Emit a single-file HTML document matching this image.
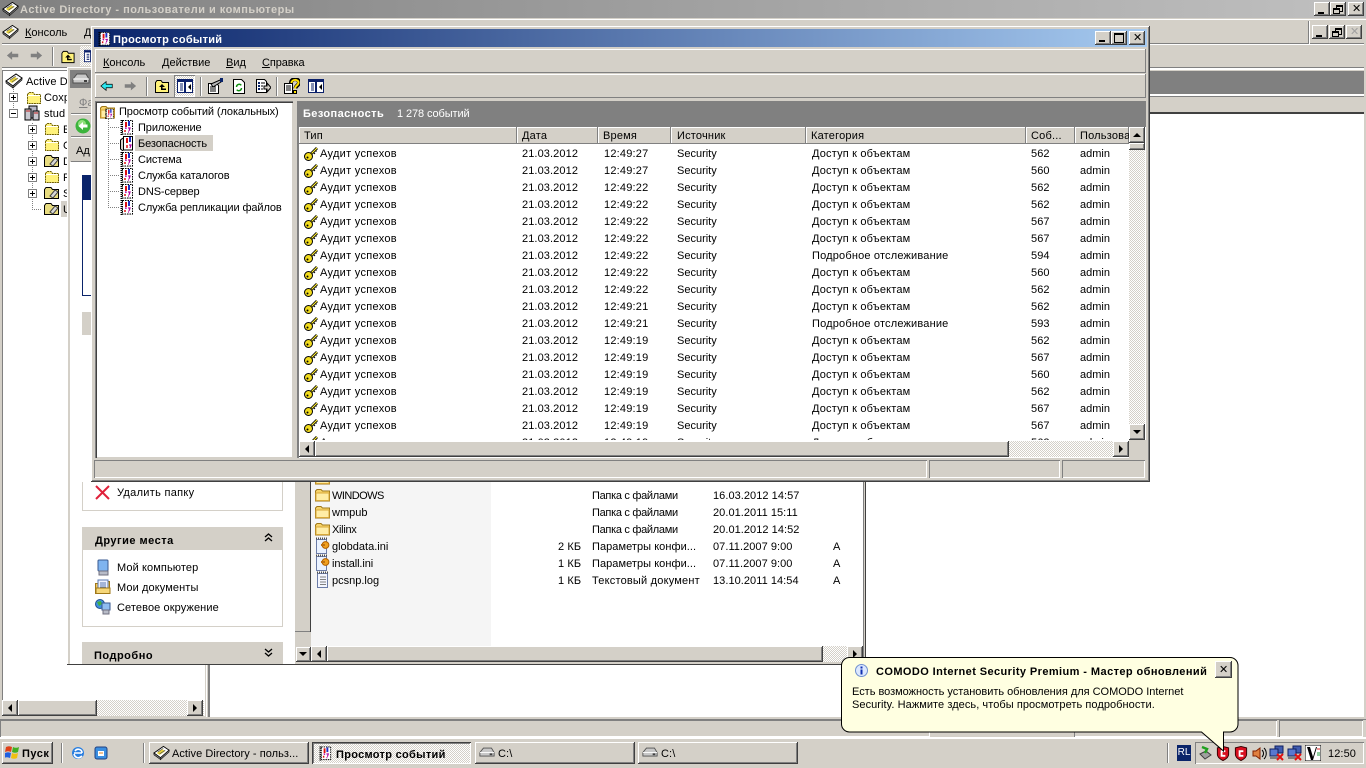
<!DOCTYPE html>
<html><head><meta charset="utf-8"><title>Просмотр событий</title>
<style>
html,body{margin:0;padding:0}
body{width:1366px;height:768px;overflow:hidden;position:relative;background:#d4d0c8;font:11px "Liberation Sans","DejaVu Sans",sans-serif;letter-spacing:.1px;color:#000}
div,svg,span.a{position:absolute}
.t{position:absolute;white-space:nowrap;line-height:14px;height:14px;margin-top:1px}
.b{font-weight:bold}
.w{background:#fff}
.g{background:#d4d0c8}
.d{background:#808080}
.k{background:#404040}
.r{background:#d4d0c8;box-shadow:inset -1px -1px #404040,inset 1px 1px #fff,inset -2px -2px #808080}
.s{background:#d4d0c8;box-shadow:inset -1px -1px #808080,inset 1px 1px #fff}
.i{box-shadow:inset 1px 1px #808080,inset -1px -1px #fff}
.x{background:repeating-conic-gradient(#fff 0 25%,#d4d0c8 0 50%) 0 0/2px 2px}
.c{background:#d4d0c8;box-shadow:inset -1px -1px #404040,inset 1px 1px #fff,inset -2px -2px #808080;width:16px;height:14px}
.u,.n,.l,.f{width:0;height:0;position:absolute}
.u{border:4px solid transparent;border-top:0;border-bottom:4px solid #000;left:4px;top:6px}
.n{border:4px solid transparent;border-bottom:0;border-top:4px solid #000;left:4px;top:6px}
.l{border:4px solid transparent;border-left:0;border-right:4px solid #000;left:6px;top:4px}
.f{border:4px solid transparent;border-right:0;border-left:4px solid #000;left:6px;top:4px}
table{border-collapse:collapse;table-layout:fixed;position:absolute}
td{padding:0;height:17px;line-height:17px;white-space:nowrap;overflow:hidden}
.ev{width:828px}
.ev td{padding-left:5px}
.ev td:first-child{padding-left:19px;position:relative;letter-spacing:.3px}
.ev td:first-child svg{left:2px;top:0}
.ev td:nth-child(2){letter-spacing:.1px}
.ev td:nth-child(3){padding-left:6px;letter-spacing:.2px}
.ev td:nth-child(4){padding-left:6px;letter-spacing:0}
.ev td:nth-child(5){padding-left:6px;letter-spacing:.18px}
.ev td:nth-child(6){letter-spacing:.1px}
.ev td:nth-child(7){letter-spacing:0}
.hd{background:#d4d0c8;box-shadow:inset -1px -1px #808080,inset 1px 1px #fff;height:17px;top:127px;line-height:19px;padding-left:4px;box-sizing:border-box;white-space:nowrap;overflow:hidden;letter-spacing:.2px}
.dot-h{height:1px;background:repeating-linear-gradient(90deg,#808080 0 1px,transparent 1px 2px)}
.dot-v{width:1px;background:repeating-linear-gradient(0deg,#808080 0 1px,transparent 1px 2px)}
.box{width:7px;height:7px;border:1px solid #808080;background:#fff}
.box:before{content:"";position:absolute;left:1px;top:3px;width:5px;height:1px;background:#000}
.box.p:after{content:"";position:absolute;left:3px;top:1px;width:1px;height:5px;background:#000}
.sep{width:1px;background:#808080;box-shadow:1px 0 #fff}
.tr{letter-spacing:-.1px}
.m{letter-spacing:0}
.pf{letter-spacing:-.3px}
.dt{letter-spacing:.05px}
</style></head><body>
<svg width="0" height="0" style="left:0;top:0"><defs>
<symbol id="key" viewBox="0 0 16 16"><path d="M14 2 8 8" stroke="#000" stroke-width="2.800" fill="none"/><path d="M14 2 8 8" stroke="#ffee33" stroke-width="1.200" fill="none"/><path d="M10.500 6.500l1.500 1.500M12.500 4.500l1 1" stroke="#000"/><circle cx="5.500" cy="10.500" r="4" fill="#f2dc1e" stroke="#000"/><circle cx="4.500" cy="11.500" r="1" fill="#000"/></symbol>
<symbol id="log" viewBox="0 0 16 16"><rect x="2" y="1" width="12" height="15" fill="#000" opacity=".12"/><rect x="3.500" y="1.500" width="10" height="13.500" fill="#fff" stroke="#000" stroke-dasharray="1.500 1"/><path d="M2.500 1v15" stroke="#000" stroke-width="2" stroke-dasharray="1 1"/><path d="M7 3v5" stroke="#e01010" stroke-width="2"/><path d="M10 2v5" stroke="#1c2fc4" stroke-width="2"/><path d="M6 9h1v1M9 9h2l-1 3M9 13h1" stroke="#b000a0" stroke-width="1.200" fill="none"/><path d="M6 11v2" stroke="#e01010" stroke-width="1.500"/></symbol>
<symbol id="logs" viewBox="0 0 16 16"><rect x="4.500" y="1.500" width="9" height="13.500" fill="#fff" stroke="#000"/><path d="M4 3 1.500 5v9l2.500 2" fill="#d4d0c8" stroke="#000"/><path d="M8 3v5" stroke="#e01010" stroke-width="2"/><path d="M11 2v5" stroke="#1c2fc4" stroke-width="2"/><path d="M8 10v3" stroke="#e01010" stroke-width="1.500"/><path d="M10 10h2l-1 3" stroke="#b000a0" stroke-width="1.200" fill="none"/></symbol>
<symbol id="fold" viewBox="0 0 16 16"><path d="M1.500 4.500 3 2.500h4l1.500 2h6v9h-13z" fill="#fff27a" stroke="#706000" stroke-dasharray="2 .6"/><path d="M2 5.500h12" stroke="#fff"/></symbol>
<symbol id="tfold" viewBox="0 0 16 16"><path d="M.5 4.500 2 2.500h5l1.500 2h6v9H.5z" fill="#e8dc80" stroke="#000"/><path d="M6 11l5-6 3 2-5 6z" fill="#d8d8d8" stroke="#404040"/></symbol>
<symbol id="xfold" viewBox="0 0 16 16"><path d="M.5 4 2 2.500h4L7.500 4h7v10H.5z" fill="#f6d36a" stroke="#a07818"/><rect x="1" y="6" width="13" height="7.500" fill="#ffeda6" stroke="#d9a93a"/></symbol>
<symbol id="up" viewBox="0 0 16 16"><path d="M1.500 4.500 3 2.500h4l1.500 2h6v10h-13z" fill="#fff27a" stroke="#000"/><path d="M8 6 5 9h2v3h5v-1.500H8.500V9H11z" fill="#000"/></symbol>
<symbol id="ad" viewBox="0 0 18 16"><path d="M1 8 11 1l6 4-9 8z" fill="#fff" stroke="#000"/><path d="M1 8l7 5v2L1 10zM8 13l9-8v2l-9 8z" fill="#808080" stroke="#000" stroke-width=".6"/><path d="M4 8l6-4 3 2-6 4z" fill="#e8d43a"/><path d="M5 7l6-4M7 9l6-4" stroke="#555" stroke-width=".7"/></symbol>
<symbol id="lar" viewBox="0 0 16 12"><path d="M1 6l6-5v3h7v4H7v3z" fill="currentColor" stroke="#000" stroke-width=".8"/></symbol>
<symbol id="rar" viewBox="0 0 16 12"><path d="M15 6 9 1v3H2v4h7v3z" fill="#808080"/></symbol>
<symbol id="lay" viewBox="0 0 16 14"><rect x=".5" y=".5" width="15" height="13" fill="#fff" stroke="#0a1f6a" stroke-width="1"/><rect x="1" y="1" width="14" height="2" fill="#0a1f6a"/><rect x="7" y="3" width="2" height="10" fill="#0a1f6a"/><path d="M3 5h3M3 7h3M3 9h3M3 11h3" stroke="#0a1f6a"/><path d="M14 5v6l-3-3z" fill="#000"/></symbol>
<symbol id="prop" viewBox="0 0 16 16"><path d="M1.500 5.500h8l2 2v8h-10z" fill="#fff" stroke="#000"/><path d="M3 9h6M3 11h6M3 13h6" stroke="#000"/><path d="M4 6l9-4 1 2-8 5z" stroke="#000" fill="#b8b8b8"/><rect x="13" y="0" width="3" height="4" fill="#0a246a"/></symbol>
<symbol id="ref" viewBox="0 0 16 16"><path d="M2.500 1.500h8l3 3v11h-11z" fill="#fff" stroke="#000"/><path d="M5.500 9a2.700 2.700 0 0 1 4.800-1.700M10.500 10a2.700 2.700 0 0 1-4.800 1.700" stroke="#109010" stroke-width="1.400" fill="none"/></symbol>
<symbol id="exp" viewBox="0 0 16 16"><path d="M1.500 1.500h8l2 2v11h-10z" fill="#fff" stroke="#000"/><path d="M3 5h2M3 8h2M3 11h2" stroke="#0a246a" stroke-width="2"/><path d="M6 5h4M6 8h2M6 11h2" stroke="#000"/><path d="M9 8h3V5l4 4.500-4 4.500v-3H9z" fill="#d4d0c8" stroke="#000"/></symbol>
<symbol id="help" viewBox="0 0 16 16"><path d="M.5 5.500h8v10h-8z" fill="#fff" stroke="#000"/><path d="M2 8h5M2 10h5M2 12h5" stroke="#000"/><path d="M7 5c0-5 8-5 8-.5 0 3-3.500 3-3.500 6" stroke="#000" stroke-width="4" fill="none"/><path d="M7.500 5c0-4 7-4 7-.5 0 3-3.500 3-3.500 6" stroke="#ffe000" stroke-width="2" fill="none"/><rect x="9.500" y="12.500" width="3" height="3" fill="#ffe000" stroke="#000"/></symbol>
<symbol id="srv" viewBox="0 0 16 16"><rect x="5" y="1" width="8" height="12" fill="#b8b8c8" stroke="#000"/><rect x="1" y="4" width="6" height="11" fill="#c8c8d0" stroke="#000"/><rect x="9" y="6" width="6" height="9" fill="#c8c8d0" stroke="#000"/><path d="M2 6h4M10 8h4" stroke="#c02020"/></symbol>
<symbol id="drv" viewBox="0 0 18 12"><path d="M1 6 5 1h9l3 5v4H1z" fill="#c8c8c8" stroke="#505050"/><path d="M1 6h16" stroke="#fff"/><rect x="12" y="7" width="3" height="2" fill="#404040"/></symbol>
<symbol id="note" viewBox="0 0 16 18"><path d="M2.500 2.500h10v14h-10z" fill="#f4f6ff" stroke="#6b7ca8"/><path d="M2 1.500h11" stroke="#505050" stroke-dasharray="1 1" stroke-width="2"/><path d="M5 6h6M5 8.500h6M5 11h6M5 13.500h6" stroke="#808080"/></symbol>
<symbol id="ini" viewBox="0 0 16 18"><path d="M1.500 2.500h10v14h-10z" fill="#eaf2ff" stroke="#6b7ca8"/><path d="M1 1.500h11" stroke="#505050" stroke-dasharray="1 1" stroke-width="2"/><circle cx="10.500" cy="8" r="3.400" fill="#f0a020" stroke="#b06000"/><rect x="6" y="7" width="4" height="2" fill="#c07010"/></symbol>
<symbol id="mon" viewBox="0 0 16 18"><rect x="3" y="1" width="10" height="11" rx="1" fill="#7fb4f0" stroke="#3a5a90"/><rect x="4" y="12" width="9" height="4" fill="#b8bcc8" stroke="#707080"/></symbol>
<symbol id="doc" viewBox="0 0 16 16"><path d="M.5 4.500h4l1-2h9v12H.5z" fill="#f2c860" stroke="#a07818"/><rect x="3" y="1" width="10" height="11" fill="#eef2ff" stroke="#5a78b0"/><path d="M5 4h6M5 6h6M5 8h6" stroke="#5a78b0"/><rect x="1" y="9" width="14" height="5.500" fill="#f6d77a" stroke="#a07818"/></symbol>
<symbol id="net" viewBox="0 0 16 16"><circle cx="5" cy="5" r="4.500" fill="#3f8fe0" stroke="#205090"/><path d="M2 3l4-1 1 3-3 2z" fill="#40b040"/><rect x="7" y="4" width="8" height="7" fill="#8fbdf0" stroke="#3a5a90"/><rect x="8" y="11" width="6" height="4" fill="#b8bcc8" stroke="#707080"/></symbol>
<symbol id="shield" viewBox="0 0 14 16"><path d="M1 2 7 .5 13 2v7c0 3-3 5-6 6.500C4 14 1 12 1 9z" fill="#d81020" stroke="#300"/><path d="M9.500 5.500H5.500v5h4" stroke="#fff" stroke-width="2" fill="none"/></symbol>
<symbol id="netx" viewBox="0 0 16 16"><rect x="6" y="1" width="8" height="7" fill="#405cb0" stroke="#102060"/><rect x="1" y="4" width="8" height="7" fill="#5878d0" stroke="#102060"/><path d="M1 13h8" stroke="#808080" stroke-width="2"/><path d="M8 9l6 6M14 9l-6 6" stroke="#e01010" stroke-width="2"/></symbol>
</defs></svg>

<!-- Active Directory main window -->
<div style="left:0;top:0;width:1366px;height:18px;background:linear-gradient(90deg,#808080,#c0c0c0)"></div>
<svg style="left:2px;top:1px" width="17" height="16"><use href="#ad"/></svg>
<div class="t b" style="left:20px;top:2px;color:#d4d0c8;letter-spacing:.47px">Active Directory - пользователи и компьютеры</div>
<div class="c" style="left:1314px;top:2px"><div style="left:4px;top:10px;width:6px;height:2px;background:#000"></div></div>
<div class="c" style="left:1330px;top:2px"><div style="left:6px;top:3px;width:5px;height:4px;border:1px solid #000;border-top-width:2px"></div><div style="left:3px;top:6px;width:5px;height:3px;border:1px solid #000;border-top-width:2px;background:#d4d0c8"></div></div>
<div class="c" style="left:1348px;top:2px"><div class="t b" style="left:4px;top:-1px;font-size:11px">✕</div></div>
<div class="w" style="left:0;top:19px;width:1366px;height:1px"></div>
<div class="d" style="left:2px;top:43px;width:1362px;height:1px"></div>
<div class="w" style="left:2px;top:44px;width:1362px;height:1px"></div>
<div class="d" style="left:2px;top:67px;width:1362px;height:1px"></div>
<div class="w" style="left:2px;top:68px;width:1362px;height:2px"></div>
<div class="w" style="left:1309px;top:21px;width:1px;height:23px"></div>
<div class="d" style="left:1308px;top:21px;width:1px;height:23px"></div>
<svg style="left:2px;top:24px" width="17" height="16"><use href="#ad"/></svg>
<div class="t m" style="left:25px;top:25px"><u>К</u>онсоль</div>
<div class="t" style="left:84px;top:25px"><u>Д</u></div>
<div class="c" style="left:1312px;top:25px"><div style="left:4px;top:10px;width:6px;height:2px;background:#000"></div></div>
<div class="c" style="left:1329px;top:25px"><div style="left:6px;top:3px;width:5px;height:4px;border:1px solid #000;border-top-width:2px"></div><div style="left:3px;top:6px;width:5px;height:3px;border:1px solid #000;border-top-width:2px;background:#d4d0c8"></div></div>
<div class="c" style="left:1346px;top:25px"><div class="t b" style="left:4px;top:-1px;color:#a0a0a0">✕</div></div>
<svg style="left:6px;top:50px" width="14" height="11"><use href="#rar" transform="matrix(-1 0 0 1 14 0)"/></svg>
<svg style="left:29px;top:50px" width="14" height="11"><use href="#rar"/></svg>
<div class="sep" style="left:52px;top:47px;height:19px"></div>
<svg style="left:60px;top:49px" width="16" height="15"><use href="#up"/></svg>
<div class="x" style="left:80px;top:46px;width:12px;height:20px"></div>
<svg style="left:84px;top:49px" width="14" height="14"><use href="#lay"/></svg>
<!-- right pane bands -->
<div class="d" style="left:865px;top:71px;width:499px;height:23px"></div>
<div class="w" style="left:865px;top:94px;width:499px;height:2px"></div>
<div class="k" style="left:865px;top:96px;width:499px;height:1px;background:#808080"></div>
<div class="k" style="left:865px;top:112px;width:499px;height:2px"></div>
<div class="w" style="left:210px;top:114px;width:1154px;height:603px"></div>
<!-- AD tree -->
<div class="w" style="left:2px;top:70px;width:203px;height:646px;box-shadow:inset 1px 1px #808080"></div>
<div class="d" style="left:208px;top:664px;width:2px;height:54px"></div>
<div class="w" style="left:206px;top:664px;width:1px;height:54px"></div>
<div class="g" style="left:0;top:717px;width:1366px;height:2px"></div>
<div class="d" style="left:0;top:719px;width:1366px;height:1px"></div>
<div class="i" style="left:0;top:720px;width:930px;height:17px"></div>
<div class="i" style="left:1074px;top:720px;width:203px;height:17px"></div>
<div class="i" style="left:1279px;top:720px;width:84px;height:17px"></div>
<div class="w" style="left:0;top:737px;width:1366px;height:2px"></div>
<!-- AD tree scrollbar -->
<div class="x" style="left:2px;top:700px;width:202px;height:16px"></div>
<div class="r" style="left:2px;top:700px;width:16px;height:16px"><div class="l"></div></div>
<div class="r" style="left:18px;top:700px;width:79px;height:16px"></div>
<div class="r" style="left:187px;top:700px;width:16px;height:16px"><div class="f"></div></div>
<div class="dot-v" style="left:13px;top:88px;height:26px"></div>
<div class="box p" style="left:9px;top:93px"></div>
<div class="box" style="left:9px;top:109px"></div>
<div class="dot-v" style="left:32px;top:122px;height:86px"></div>
<div class="dot-h" style="left:32px;top:209px;width:10px"></div>
<svg style="left:5px;top:73px" width="18" height="16"><use href="#ad"/></svg>
<div class="t" style="left:26px;top:74px">Active D</div>
<svg style="left:26px;top:90px" width="16" height="16"><use href="#fold"/></svg>
<div class="t" style="left:44px;top:90px">Coxp</div>
<svg style="left:24px;top:105px" width="16" height="16"><use href="#srv"/></svg>
<div class="t" style="left:44px;top:106px">stud</div>
<div class="box p" style="left:28px;top:125px"></div><svg style="left:44px;top:121px" width="16" height="16"><use href="#fold"/></svg><div class="t" style="left:63px;top:122px">E</div>
<div class="box p" style="left:28px;top:141px"></div><svg style="left:44px;top:137px" width="16" height="16"><use href="#fold"/></svg><div class="t" style="left:63px;top:138px">C</div>
<div class="box p" style="left:28px;top:157px"></div><svg style="left:44px;top:153px" width="16" height="16"><use href="#tfold"/></svg><div class="t" style="left:63px;top:154px">D</div>
<div class="box p" style="left:28px;top:173px"></div><svg style="left:44px;top:169px" width="16" height="16"><use href="#fold"/></svg><div class="t" style="left:63px;top:170px">F</div>
<div class="box p" style="left:28px;top:189px"></div><svg style="left:44px;top:185px" width="16" height="16"><use href="#tfold"/></svg><div class="t" style="left:63px;top:186px">S</div>
<svg style="left:44px;top:201px" width="16" height="16"><use href="#tfold"/></svg>
<div class="g" style="left:61px;top:201px;width:8px;height:16px"></div><div class="t" style="left:63px;top:202px">U</div>

<!-- Explorer window -->
<div class="g" style="left:67px;top:67px;width:798px;height:597px;box-shadow:inset 1px 1px #fff"></div>
<div class="k" style="left:67px;top:664px;width:799px;height:1px"></div>
<div class="k" style="left:865px;top:67px;width:1px;height:598px"></div>
<div class="d" style="left:70px;top:70px;width:793px;height:18px"></div>
<svg style="left:72px;top:73px" width="18" height="12"><use href="#drv"/></svg>
<div class="t" style="left:79px;top:95px;color:#808080"><u>Ф</u>а</div>
<div class="d" style="left:71px;top:113px;width:792px;height:1px"></div><div class="w" style="left:71px;top:114px;width:792px;height:1px"></div>
<svg style="left:75px;top:118px" width="16" height="16"><circle cx="8" cy="8" r="7.500" fill="#3cb43c"/><circle cx="7" cy="6" r="4" fill="#8ee07a"/><path d="M3.500 8 8 4v2.500h4.500v3H8V12z" fill="#fff"/></svg>
<div class="d" style="left:71px;top:136px;width:792px;height:1px"></div><div class="w" style="left:71px;top:137px;width:792px;height:1px"></div>
<div class="t" style="left:76px;top:143px">Ад</div>
<div class="d" style="left:71px;top:161px;width:792px;height:1px"></div>
<div class="w" style="left:70px;top:162px;width:225px;height:502px"></div>
<div style="left:82px;top:175px;width:9px;height:25px;background:#0a246a"></div>
<div style="left:82px;top:200px;width:9px;height:96px;border-left:1px solid #0a246a;border-bottom:1px solid #0a246a;box-sizing:border-box"></div>
<div class="g" style="left:82px;top:312px;width:9px;height:23px"></div>
<div class="w" style="left:82px;top:482px;width:201px;height:29px;border:1px solid #d4d0c8;border-top:0;box-sizing:border-box"></div>
<svg style="left:95px;top:485px" width="15" height="15"><path d="M1 1l13 13M14 1 1 14" stroke="#e0203a" stroke-width="2"/></svg>
<div class="t" style="left:117px;top:485px;letter-spacing:.3px">Удалить папку</div>
<div class="g" style="left:82px;top:527px;width:201px;height:23px"></div>
<div class="t b" style="left:95px;top:533px;letter-spacing:.5px">Другие места</div>
<svg style="left:264px;top:533px" width="9" height="10"><path d="M1 4l3.500-3L8 4M1 8l3.500-3L8 8" stroke="#000" stroke-width="1.300" fill="none"/></svg>
<div class="w" style="left:82px;top:550px;width:201px;height:77px;border:1px solid #d4d0c8;border-top:0;box-sizing:border-box"></div>
<svg style="left:95px;top:559px" width="16" height="18"><use href="#mon"/></svg><div class="t" style="left:117px;top:560px">Мой компьютер</div>
<svg style="left:95px;top:579px" width="16" height="16"><use href="#doc"/></svg><div class="t" style="left:117px;top:580px">Мои документы</div>
<svg style="left:95px;top:599px" width="16" height="16"><use href="#net"/></svg><div class="t" style="left:117px;top:600px">Сетевое окружение</div>
<div class="g" style="left:82px;top:642px;width:201px;height:22px"></div>
<div class="t b" style="left:94px;top:648px;letter-spacing:.5px">Подробно</div>
<svg style="left:264px;top:648px" width="9" height="10"><path d="M1 1l3.500 3L8 1M1 5l3.500 3L8 5" stroke="#000" stroke-width="1.300" fill="none"/></svg>
<div class="g" style="left:295px;top:162px;width:15px;height:502px"></div>
<div class="k" style="left:295px;top:631px;width:15px;height:1px;background:#808080"></div>
<div class="k" style="left:310px;top:162px;width:1px;height:470px"></div>
<div class="r" style="left:296px;top:647px;width:15px;height:15px"><div class="n" style="left:3px;top:5px"></div></div>
<div class="w" style="left:311px;top:162px;width:552px;height:484px"></div>
<div style="left:311px;top:162px;width:180px;height:484px;background:#f5f5f5"></div>
<svg style="left:315px;top:470px" width="16" height="16"><use href="#xfold"/></svg>
<svg style="left:315px;top:487px" width="16" height="16"><use href="#xfold"/></svg><div class="t" style="left:332px;top:488px;letter-spacing:-.55px">WINDOWS</div><div class="t pf" style="left:592px;top:488px">Папка с файлами</div><div class="t dt" style="left:713px;top:488px">16.03.2012 14:57</div>
<svg style="left:315px;top:504px" width="16" height="16"><use href="#xfold"/></svg><div class="t m" style="left:332px;top:505px">wmpub</div><div class="t pf" style="left:592px;top:505px">Папка с файлами</div><div class="t dt" style="left:713px;top:505px">20.01.2011 15:11</div>
<svg style="left:315px;top:521px" width="16" height="16"><use href="#xfold"/></svg><div class="t" style="left:332px;top:522px;letter-spacing:-.3px">Xilinx</div><div class="t pf" style="left:592px;top:522px">Папка с файлами</div><div class="t dt" style="left:713px;top:522px">20.01.2012 14:52</div>
<svg style="left:315px;top:537px" width="16" height="18"><use href="#ini"/></svg><div class="t m" style="left:332px;top:539px">globdata.ini</div><div class="t" style="left:558px;top:539px">2 КБ</div><div class="t dt" style="left:592px;top:539px">Параметры конфи...</div><div class="t dt" style="left:713px;top:539px">07.11.2007 9:00</div><div class="t" style="left:833px;top:539px">A</div>
<svg style="left:315px;top:554px" width="16" height="18"><use href="#ini"/></svg><div class="t tr" style="left:332px;top:556px">install.ini</div><div class="t" style="left:558px;top:556px">1 КБ</div><div class="t dt" style="left:592px;top:556px">Параметры конфи...</div><div class="t dt" style="left:713px;top:556px">07.11.2007 9:00</div><div class="t" style="left:833px;top:556px">A</div>
<svg style="left:315px;top:571px" width="16" height="18"><use href="#note"/></svg><div class="t m" style="left:332px;top:573px">pcsnp.log</div><div class="t" style="left:558px;top:573px">1 КБ</div><div class="t" style="left:592px;top:573px;letter-spacing:.2px">Текстовый документ</div><div class="t dt" style="left:713px;top:573px">13.10.2011 14:54</div><div class="t" style="left:833px;top:573px">A</div>
<div class="x" style="left:311px;top:646px;width:552px;height:16px"></div>
<div class="r" style="left:311px;top:646px;width:16px;height:16px"><div class="l"></div></div>
<div class="r" style="left:327px;top:646px;width:496px;height:16px"></div>
<div class="r" style="left:847px;top:646px;width:16px;height:16px"><div class="f"></div></div>
<div class="d" style="left:863px;top:162px;width:1px;height:500px"></div>

<!-- Event viewer window -->
<div class="g" style="left:91px;top:26px;width:1059px;height:456px;box-shadow:inset -1px -1px #404040,inset 1px 1px #fff,inset -2px -2px #808080"></div>
<div style="left:94px;top:29px;width:1053px;height:18px;background:linear-gradient(90deg,#0a246a,#a6caf0)"></div>
<svg style="left:97px;top:31px" width="15" height="15"><use href="#log"/></svg>
<div class="t b" style="left:113px;top:32px;color:#fff;letter-spacing:.28px">Просмотр событий</div>
<div class="c" style="left:1095px;top:31px"><div style="left:4px;top:9px;width:6px;height:2px;background:#000"></div></div>
<div class="c" style="left:1111px;top:31px"><div style="left:3px;top:2px;width:8px;height:7px;border:1px solid #000;border-top-width:2px"></div></div>
<div class="c" style="left:1129px;top:31px"><div class="t b" style="left:4px;top:-1px">✕</div></div>
<div class="s" style="left:95px;top:49px;width:1051px;height:24px"></div>
<div class="t m" style="left:103px;top:55px"><u>К</u>онсоль</div>
<div class="t m" style="left:162px;top:55px"><u>Д</u>ействие</div>
<div class="t m" style="left:226px;top:55px"><u>В</u>ид</div>
<div class="t" style="left:262px;top:55px;letter-spacing:-.1px"><u>С</u>правка</div>
<div class="s" style="left:95px;top:74px;width:1051px;height:24px"></div>
<svg style="left:100px;top:80px;color:#2ce8f0" width="14" height="12"><use href="#lar"/></svg>
<svg style="left:123px;top:80px" width="14" height="12"><use href="#rar"/></svg>
<div class="sep" style="left:146px;top:77px;height:19px"></div>
<svg style="left:154px;top:78px" width="16" height="16"><use href="#up"/></svg>
<div class="x" style="left:174px;top:75px;width:21px;height:22px;box-shadow:inset 1px 1px #808080,inset -1px -1px #fff"></div>
<svg style="left:177px;top:79px" width="16" height="14"><use href="#lay"/></svg>
<div class="sep" style="left:200px;top:77px;height:19px"></div>
<svg style="left:207px;top:78px" width="16" height="16"><use href="#prop"/></svg>
<svg style="left:231px;top:78px" width="16" height="16"><use href="#ref"/></svg>
<svg style="left:255px;top:78px" width="16" height="16"><use href="#exp"/></svg>
<div class="sep" style="left:276px;top:77px;height:19px"></div>
<svg style="left:284px;top:78px" width="16" height="16"><use href="#help"/></svg>
<svg style="left:308px;top:79px" width="16" height="14"><use href="#lay"/></svg>

<!-- tree pane -->
<div class="w" style="left:95px;top:101px;width:198px;height:357px;box-shadow:inset 1px 1px #808080,inset 2px 2px #404040,inset -1px -1px #d4d0c8"></div>
<div class="dot-v" style="left:108px;top:117px;height:91px"></div>
<div class="dot-h" style="left:108px;top:127px;width:11px"></div>
<div class="dot-h" style="left:108px;top:143px;width:11px"></div>
<div class="dot-h" style="left:108px;top:159px;width:11px"></div>
<div class="dot-h" style="left:108px;top:175px;width:11px"></div>
<div class="dot-h" style="left:108px;top:191px;width:11px"></div>
<div class="dot-h" style="left:108px;top:207px;width:11px"></div>
<svg style="left:100px;top:104px" width="16" height="16"><use href="#xfold"/></svg><svg style="left:104px;top:108px" width="11" height="11"><use href="#log"/></svg>
<div class="t tr" style="left:119px;top:104px">Просмотр событий (локальных)</div>
<div class="g" style="left:135px;top:135px;width:78px;height:16px"></div>
<svg style="left:119px;top:119px" width="16" height="16"><use href="#log"/></svg><div class="t tr" style="left:138px;top:120px">Приложение</div>
<svg style="left:119px;top:135px" width="16" height="16"><use href="#logs"/></svg><div class="t tr" style="left:138px;top:136px">Безопасность</div>
<svg style="left:119px;top:151px" width="16" height="16"><use href="#log"/></svg><div class="t tr" style="left:138px;top:152px">Система</div>
<svg style="left:119px;top:167px" width="16" height="16"><use href="#log"/></svg><div class="t tr" style="left:138px;top:168px">Служба каталогов</div>
<svg style="left:119px;top:183px" width="16" height="16"><use href="#log"/></svg><div class="t tr" style="left:138px;top:184px">DNS-сервер</div>
<svg style="left:119px;top:199px" width="16" height="16"><use href="#log"/></svg><div class="t tr" style="left:138px;top:200px">Служба репликации файлов</div>

<!-- right pane -->
<div class="d" style="left:297px;top:101px;width:849px;height:24px"></div>
<div class="t b" style="left:303px;top:106px;color:#fff;letter-spacing:.4px">Безопасность</div>
<div class="t" style="left:397px;top:106px;color:#fff;letter-spacing:-.1px">1 278 событий</div>
<div class="w" style="left:297px;top:125px;width:849px;height:333px;box-shadow:inset 2px 2px #808080"></div>
<div class="hd" style="left:299px;width:218px;padding-left:5px">Тип</div>
<div class="hd" style="left:517px;width:81px;padding-left:5px">Дата</div>
<div class="hd" style="left:598px;width:73px;padding-left:5px">Время</div>
<div class="hd" style="left:671px;width:135px;padding-left:6px">Источник</div>
<div class="hd" style="left:806px;width:220px;padding-left:5px">Категория</div>
<div class="hd" style="left:1026px;width:49px;padding-left:5px">Соб...</div>
<div class="hd" style="left:1075px;width:54px;padding-left:5px">Пользова</div>
<div style="left:299px;top:145px;width:830px;height:295px;overflow:hidden">
<table class="ev" style="left:2px;top:0;width:828px;transform:translateY(1px)">
<colgroup><col style="width:216px"><col style="width:81px"><col style="width:73px"><col style="width:135px"><col style="width:220px"><col style="width:49px"><col style="width:54px"></colgroup>
<tr><td><svg width="16" height="16"><use href="#key"/></svg>Аудит успехов</td><td>21.03.2012</td><td>12:49:27</td><td>Security</td><td>Доступ к объектам</td><td>562</td><td>admin</td></tr>
<tr><td><svg width="16" height="16"><use href="#key"/></svg>Аудит успехов</td><td>21.03.2012</td><td>12:49:27</td><td>Security</td><td>Доступ к объектам</td><td>560</td><td>admin</td></tr>
<tr><td><svg width="16" height="16"><use href="#key"/></svg>Аудит успехов</td><td>21.03.2012</td><td>12:49:22</td><td>Security</td><td>Доступ к объектам</td><td>562</td><td>admin</td></tr>
<tr><td><svg width="16" height="16"><use href="#key"/></svg>Аудит успехов</td><td>21.03.2012</td><td>12:49:22</td><td>Security</td><td>Доступ к объектам</td><td>562</td><td>admin</td></tr>
<tr><td><svg width="16" height="16"><use href="#key"/></svg>Аудит успехов</td><td>21.03.2012</td><td>12:49:22</td><td>Security</td><td>Доступ к объектам</td><td>567</td><td>admin</td></tr>
<tr><td><svg width="16" height="16"><use href="#key"/></svg>Аудит успехов</td><td>21.03.2012</td><td>12:49:22</td><td>Security</td><td>Доступ к объектам</td><td>567</td><td>admin</td></tr>
<tr><td><svg width="16" height="16"><use href="#key"/></svg>Аудит успехов</td><td>21.03.2012</td><td>12:49:22</td><td>Security</td><td>Подробное отслеживание</td><td>594</td><td>admin</td></tr>
<tr><td><svg width="16" height="16"><use href="#key"/></svg>Аудит успехов</td><td>21.03.2012</td><td>12:49:22</td><td>Security</td><td>Доступ к объектам</td><td>560</td><td>admin</td></tr>
<tr><td><svg width="16" height="16"><use href="#key"/></svg>Аудит успехов</td><td>21.03.2012</td><td>12:49:22</td><td>Security</td><td>Доступ к объектам</td><td>562</td><td>admin</td></tr>
<tr><td><svg width="16" height="16"><use href="#key"/></svg>Аудит успехов</td><td>21.03.2012</td><td>12:49:21</td><td>Security</td><td>Доступ к объектам</td><td>562</td><td>admin</td></tr>
<tr><td><svg width="16" height="16"><use href="#key"/></svg>Аудит успехов</td><td>21.03.2012</td><td>12:49:21</td><td>Security</td><td>Подробное отслеживание</td><td>593</td><td>admin</td></tr>
<tr><td><svg width="16" height="16"><use href="#key"/></svg>Аудит успехов</td><td>21.03.2012</td><td>12:49:19</td><td>Security</td><td>Доступ к объектам</td><td>562</td><td>admin</td></tr>
<tr><td><svg width="16" height="16"><use href="#key"/></svg>Аудит успехов</td><td>21.03.2012</td><td>12:49:19</td><td>Security</td><td>Доступ к объектам</td><td>567</td><td>admin</td></tr>
<tr><td><svg width="16" height="16"><use href="#key"/></svg>Аудит успехов</td><td>21.03.2012</td><td>12:49:19</td><td>Security</td><td>Доступ к объектам</td><td>560</td><td>admin</td></tr>
<tr><td><svg width="16" height="16"><use href="#key"/></svg>Аудит успехов</td><td>21.03.2012</td><td>12:49:19</td><td>Security</td><td>Доступ к объектам</td><td>562</td><td>admin</td></tr>
<tr><td><svg width="16" height="16"><use href="#key"/></svg>Аудит успехов</td><td>21.03.2012</td><td>12:49:19</td><td>Security</td><td>Доступ к объектам</td><td>567</td><td>admin</td></tr>
<tr><td><svg width="16" height="16"><use href="#key"/></svg>Аудит успехов</td><td>21.03.2012</td><td>12:49:19</td><td>Security</td><td>Доступ к объектам</td><td>567</td><td>admin</td></tr>
<tr><td><svg width="16" height="16"><use href="#key"/></svg>Аудит успехов</td><td>21.03.2012</td><td>12:49:19</td><td>Security</td><td>Доступ к объектам</td><td>562</td><td>admin</td></tr>
</table></div>
<!-- vertical scrollbar -->
<div class="x" style="left:1129px;top:127px;width:16px;height:313px"></div>
<div class="r" style="left:1129px;top:127px;width:16px;height:16px"><div class="u"></div></div>
<div class="r" style="left:1129px;top:143px;width:16px;height:7px"></div>
<div class="r" style="left:1129px;top:424px;width:16px;height:16px"><div class="n"></div></div>
<!-- horizontal scrollbar -->
<div class="x" style="left:299px;top:441px;width:830px;height:16px"></div>
<div class="r" style="left:299px;top:441px;width:16px;height:16px"><div class="l"></div></div>
<div class="r" style="left:315px;top:441px;width:694px;height:16px"></div>
<div class="r" style="left:1113px;top:441px;width:16px;height:16px"><div class="f"></div></div>
<div class="g" style="left:1129px;top:440px;width:17px;height:18px"></div>
<!-- status -->
<div class="i" style="left:94px;top:460px;width:833px;height:18px"></div>
<div class="i" style="left:929px;top:460px;width:131px;height:18px"></div>
<div class="i" style="left:1062px;top:460px;width:83px;height:18px"></div>

<!-- Taskbar -->
<div class="g" style="left:0;top:739px;width:1366px;height:29px"></div>
<div class="r" style="left:2px;top:742px;width:51px;height:22px"></div>
<svg style="left:5px;top:745px" width="15" height="15"><path d="M1 2c2-1 4-1 6 0l-1 5c-2-1-4-1-6 0z" fill="#e04018"/><path d="M8 2c2 1 4 1 6 0l-1 5c-2 1-4 1-6 0z" fill="#40b020"/><path d="M0 8c2-1 4-1 6 0l-1 5c-2-1-4-1-6 0z" fill="#2060e0"/><path d="M7 8c2 1 4 1 6 0l-1 5c-2 1-4 1-6 0z" fill="#f0c010"/></svg>
<div class="t b" style="left:22px;top:746px;letter-spacing:.5px">Пуск</div>
<div class="sep" style="left:61px;top:743px;height:20px"></div>
<svg style="left:70px;top:745px" width="16" height="16"><circle cx="8" cy="8" r="6" fill="#2a7fe0"/><path d="M4 8h8M5 6c2-3 7-2 7 2M12 11c-3 3-7 2-8-2" stroke="#fff" stroke-width="1.600" fill="none"/></svg>
<svg style="left:93px;top:745px" width="16" height="16"><rect x="2" y="2" width="12" height="12" rx="2" fill="#3a8ee0" stroke="#204080"/><path d="M5 6h6v5H5z" fill="#fff"/><path d="M6 8h4" stroke="#e08020"/></svg>
<div class="sep" style="left:143px;top:743px;height:20px"></div>
<div class="r" style="left:149px;top:742px;width:160px;height:22px"></div>
<svg style="left:153px;top:745px" width="17" height="16"><use href="#ad"/></svg>
<div class="t" style="left:172px;top:746px;letter-spacing:.05px">Active Directory - польз...</div>
<div class="x" style="left:312px;top:742px;width:159px;height:22px;box-shadow:inset 1px 1px #404040,inset -1px -1px #fff,inset 2px 2px #808080"></div>
<svg style="left:318px;top:745px" width="15" height="16"><use href="#log"/></svg>
<div class="t b" style="left:336px;top:747px;letter-spacing:.3px">Просмотр событий</div>
<div class="r" style="left:475px;top:742px;width:160px;height:22px"></div>
<svg style="left:479px;top:747px" width="16" height="11"><use href="#drv"/></svg><div class="t" style="left:498px;top:746px">C:\</div>
<div class="r" style="left:638px;top:742px;width:160px;height:22px"></div>
<svg style="left:642px;top:747px" width="16" height="11"><use href="#drv"/></svg><div class="t" style="left:661px;top:746px">C:\</div>
<div class="sep" style="left:1167px;top:743px;height:20px"></div>
<div class="t" style="left:1177px;top:745px;margin:0;width:14px;height:16px;background:#0a246a;color:#fff;line-height:15px;text-align:center;letter-spacing:0;font-size:10px">RL</div>
<div class="i" style="left:1195px;top:742px;width:169px;height:22px"></div>
<svg style="left:1198px;top:745px" width="15" height="15"><path d="M2 9l6-3 5 4-6 4z" fill="#a0a0a0" stroke="#404040"/><path d="M4 2l5 2-2 4" stroke="#20a020" stroke-width="2.500" fill="none"/></svg>
<svg style="left:1216px;top:746px" width="14" height="15"><use href="#shield"/></svg>
<svg style="left:1234px;top:746px" width="14" height="15"><use href="#shield"/></svg>
<svg style="left:1252px;top:746px" width="15" height="15"><path d="M1 5h3l4-3v11l-4-3H1z" fill="#e08040" stroke="#802000"/><path d="M10 4c2 2 2 5 0 7M12 2c3 3 3 8 0 11" stroke="#000" fill="none"/></svg>
<svg style="left:1269px;top:745px" width="16" height="16"><use href="#netx"/></svg>
<svg style="left:1287px;top:745px" width="16" height="16"><use href="#netx"/></svg>
<svg style="left:1305px;top:745px" width="16" height="16"><rect width="16" height="16" fill="#fff" stroke="#000"/><path d="M2 2h3l3 10 3-10h1l-4 13H6z" fill="#000"/><path d="M12 8h3M12 10h3" stroke="#20a040"/><path d="M12 4h3" stroke="#e02020"/></svg>
<div class="t" style="left:1328px;top:746px">12:50</div>

<!-- Balloon -->
<svg style="left:838px;top:654px" width="404" height="102"><path d="M11.500 3.500H392a8 8 0 0 1 8 8V70a8 8 0 0 1-8 8H385.500V97L363.500 78H11.500a8 8 0 0 1-8-8V11.500a8 8 0 0 1 8-8z" fill="#ffffe1" stroke="#000" stroke-width="1"/></svg>
<svg style="left:854px;top:664px" width="15" height="15"><circle cx="7.500" cy="6.500" r="6" fill="#dce8ff" stroke="#7090d0"/><rect x="6.500" y="5.500" width="2" height="5" fill="#1030b0"/><rect x="6.500" y="2.500" width="2" height="2" fill="#1030b0"/></svg>
<div class="t b" style="left:876px;top:664px;letter-spacing:.41px">COMODO Internet Security Premium - Мастер обновлений</div>
<div class="r" style="left:1215px;top:661px;width:17px;height:17px"><div class="t b" style="left:4px;top:1px">✕</div></div>
<div class="t" style="left:852px;top:684px;letter-spacing:-.02px">Есть возможность установить обновления для COMODO Internet</div>
<div class="t" style="left:852px;top:697px;letter-spacing:.06px">Security. Нажмите здесь, чтобы просмотреть подробности.</div>
</body></html>
